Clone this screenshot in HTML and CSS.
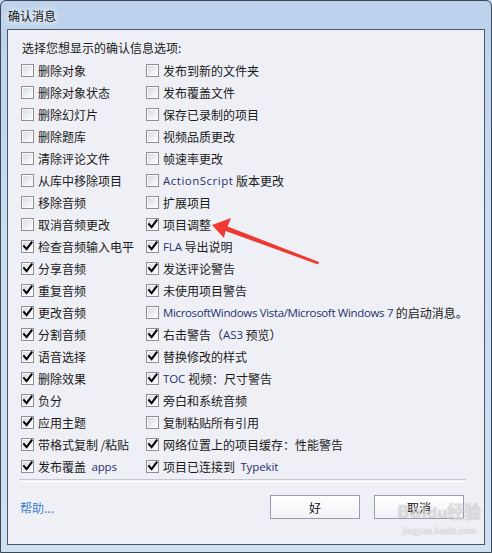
FILE: index.html
```html
<!DOCTYPE html>
<html lang="zh-CN">
<head>
  <meta charset="UTF-8" />
  <title>确认消息</title>
  <link rel="stylesheet" href="styles.css">
</head>
<body>
  <div class="window">
    <div class="titlebar"><span class="title">确认消息</span></div>

    <div class="client">
      <p class="intro">选择您想显示的确认信息选项:</p>

      <div class="options">
        <label class="opt"><span class="box"></span>删除对象</label>
        <label class="opt"><span class="box"></span>发布到新的文件夹</label>
        <label class="opt"><span class="box"></span>删除对象状态</label>
        <label class="opt"><span class="box"></span>发布覆盖文件</label>
        <label class="opt"><span class="box"></span>删除幻灯片</label>
        <label class="opt"><span class="box"></span>保存已录制的项目</label>
        <label class="opt"><span class="box"></span>删除题库</label>
        <label class="opt"><span class="box"></span>视频品质更改</label>
        <label class="opt"><span class="box"></span>清除评论文件</label>
        <label class="opt"><span class="box"></span>帧速率更改</label>
        <label class="opt"><span class="box"></span>从库中移除项目</label>
        <label class="opt"><span class="box"></span><span class="lat wide">ActionScript</span>&nbsp;版本更改</label>
        <label class="opt"><span class="box"></span>移除音频</label>
        <label class="opt"><span class="box"></span>扩展项目</label>
        <label class="opt"><span class="box"></span>取消音频更改</label>
        <label class="opt"><span class="box on"><svg viewBox="0 0 13 13"><path d="M3 6.2 L5.6 9.2 L10.6 2.4"/></svg></span>项目调整</label>
        <label class="opt"><span class="box on"><svg viewBox="0 0 13 13"><path d="M3 6.2 L5.6 9.2 L10.6 2.4"/></svg></span>检查音频输入电平</label>
        <label class="opt"><span class="box on"><svg viewBox="0 0 13 13"><path d="M3 6.2 L5.6 9.2 L10.6 2.4"/></svg></span><span class="lat">FLA</span>&nbsp;导出说明</label>
        <label class="opt"><span class="box on"><svg viewBox="0 0 13 13"><path d="M3 6.2 L5.6 9.2 L10.6 2.4"/></svg></span>分享音频</label>
        <label class="opt"><span class="box on"><svg viewBox="0 0 13 13"><path d="M3 6.2 L5.6 9.2 L10.6 2.4"/></svg></span>发送评论警告</label>
        <label class="opt"><span class="box on"><svg viewBox="0 0 13 13"><path d="M3 6.2 L5.6 9.2 L10.6 2.4"/></svg></span>重复音频</label>
        <label class="opt"><span class="box on"><svg viewBox="0 0 13 13"><path d="M3 6.2 L5.6 9.2 L10.6 2.4"/></svg></span>未使用项目警告</label>
        <label class="opt"><span class="box on"><svg viewBox="0 0 13 13"><path d="M3 6.2 L5.6 9.2 L10.6 2.4"/></svg></span>更改音频</label>
        <label class="opt"><span class="box"></span><span class="lat narrow">MicrosoftWindows Vista/Microsoft Windows 7</span>&nbsp;的启动消息。</label>
        <label class="opt"><span class="box on"><svg viewBox="0 0 13 13"><path d="M3 6.2 L5.6 9.2 L10.6 2.4"/></svg></span>分割音频</label>
        <label class="opt"><span class="box on"><svg viewBox="0 0 13 13"><path d="M3 6.2 L5.6 9.2 L10.6 2.4"/></svg></span>右击警告（<span class="lat">AS3</span>&nbsp;预览）</label>
        <label class="opt"><span class="box on"><svg viewBox="0 0 13 13"><path d="M3 6.2 L5.6 9.2 L10.6 2.4"/></svg></span>语音选择</label>
        <label class="opt"><span class="box on"><svg viewBox="0 0 13 13"><path d="M3 6.2 L5.6 9.2 L10.6 2.4"/></svg></span>替换修改的样式</label>
        <label class="opt"><span class="box on"><svg viewBox="0 0 13 13"><path d="M3 6.2 L5.6 9.2 L10.6 2.4"/></svg></span>删除效果</label>
        <label class="opt"><span class="box on"><svg viewBox="0 0 13 13"><path d="M3 6.2 L5.6 9.2 L10.6 2.4"/></svg></span><span class="lat">TOC</span>&nbsp;视频：尺寸警告</label>
        <label class="opt"><span class="box on"><svg viewBox="0 0 13 13"><path d="M3 6.2 L5.6 9.2 L10.6 2.4"/></svg></span>负分</label>
        <label class="opt"><span class="box on"><svg viewBox="0 0 13 13"><path d="M3 6.2 L5.6 9.2 L10.6 2.4"/></svg></span>旁白和系统音频</label>
        <label class="opt"><span class="box on"><svg viewBox="0 0 13 13"><path d="M3 6.2 L5.6 9.2 L10.6 2.4"/></svg></span>应用主题</label>
        <label class="opt"><span class="box"></span>复制粘贴所有引用</label>
        <label class="opt"><span class="box on"><svg viewBox="0 0 13 13"><path d="M3 6.2 L5.6 9.2 L10.6 2.4"/></svg></span>带格式复制&thinsp;/粘贴</label>
        <label class="opt"><span class="box on"><svg viewBox="0 0 13 13"><path d="M3 6.2 L5.6 9.2 L10.6 2.4"/></svg></span>网络位置上的项目缓存：性能警告</label>
        <label class="opt"><span class="box on"><svg viewBox="0 0 13 13"><path d="M3 6.2 L5.6 9.2 L10.6 2.4"/></svg></span>发布覆盖&nbsp;&nbsp;<span class="lat">apps</span></label>
        <label class="opt"><span class="box on"><svg viewBox="0 0 13 13"><path d="M3 6.2 L5.6 9.2 L10.6 2.4"/></svg></span>项目已连接到&nbsp;&nbsp;<span class="lat">Typekit</span></label>
      </div>

      <div class="sep"></div>

      <div class="footer">
        <a class="help" href="#">帮助...</a>
        <div class="buttons">
          <button class="btn">好</button>
          <button class="btn">取消</button>
        </div>
      </div>
    </div>

    <!-- red annotation arrow drawn over the dialog -->
    <svg class="arrow" viewBox="0 0 492 553">
      <polygon points="212,225 231,218 227.5,226.5 319,262 318,264.5 225.5,231 224,238" />
    </svg>

    <div class="watermark">
      <span class="wm-logo">Bai<span class="wm-paw">du</span>经验</span>
      <span class="wm-url">jingyan.baidu.com</span>
    </div>
  </div>
</body>
</html>
```

FILE: styles.css
```css
body { margin: 0; background: #c3d7ee; }

.window {
  position: relative;
  width: 492px; height: 553px;
  box-sizing: border-box;
  display: flex; flex-direction: column;
  padding: 0 6px 7px 6px;
  border: 1px solid #3c4756;
  border-radius: 6px 6px 0 0;
  background: linear-gradient(180deg, #bcd2ec 0%, #c8dcf2 40%, #cfe0f4 100%);
  font-family: "Noto Sans CJK SC", "Noto Sans", sans-serif;
  font-size: 12px;
  color: #1a1a1a;
  overflow: hidden;
}

.titlebar { height: 28px; display: flex; align-items: center; padding-left: 1px; }
.title { font-size: 12px; color: #111; text-shadow: 0 0 6px #fff, 0 0 10px #fff; }

.client {
  flex: 1;
  background: #eff0f6;
  border: 1px solid #4a5566;
  padding: 7px 0 0 13px;
  display: flex; flex-direction: column;
}

.intro { margin: 0; height: 22px; line-height: 22px; padding-left: 1px; }

.options {
  display: grid;
  grid-template-columns: 125px auto;
  grid-auto-rows: 22px;
}

.opt { display: flex; align-items: center; white-space: nowrap; }
.lat { font-family: "Open Sans", "Noto Sans", sans-serif; font-size: 11.5px; color: #27316e; letter-spacing: -0.1px; }
.lat.wide { letter-spacing: 0.5px; }
.lat.narrow { letter-spacing: -0.35px; }

.box {
  width: 11px; height: 11px;
  margin-right: 4px;
  border: 1px solid #8d8e98;
  background: linear-gradient(135deg, #d6d7de 0%, #f4f4f7 70%, #fff 100%);
  box-shadow: inset 0 0 0 1px #fbfbfc;
  position: relative;
}
.box svg { position: absolute; left: -1px; top: -1px; width: 13px; height: 13px; }
.box path { fill: none; stroke: #000; stroke-width: 2; stroke-linecap: square; stroke-linejoin: miter; }

.sep {
  margin: 2px 18px 0 -1px;
  height: 1px;
  border-top: 1px solid #c6c7ce;
  border-bottom: 1px solid #ffffff;
}

.footer { display: flex; align-items: center; justify-content: space-between; margin-top: 13px; padding-right: 20px; }
.help { color: #3b7fd0; text-decoration: none; margin-left: -1px; }
.buttons { display: flex; gap: 14px; }
.btn {
  width: 90px; height: 24px;
  font-family: "Noto Sans CJK SC", sans-serif;
  font-size: 12px;
  color: #111;
  background: linear-gradient(180deg, #ffffff 0%, #f3f3f7 100%);
  border: 1px solid #979cb0;
  border-radius: 0;
  padding: 0;
}

.arrow { position: absolute; left: -1px; top: -1px; width: 492px; height: 553px; pointer-events: none; }
.arrow polygon { fill: #ee3a33; }

.watermark {
  position: absolute; left: 396px; top: 500px;
  display: flex; flex-direction: column; align-items: center;
  white-space: nowrap;
  pointer-events: none;
  color: rgba(255, 255, 255, 0.5);
  text-shadow: 0 0 1px rgba(120, 120, 130, 0.55);
}
.wm-logo { font-family: "DejaVu Sans", sans-serif; font-weight: bold; font-size: 17px; line-height: 22px; }
.wm-paw { font-size: 14px; }
.wm-url { font-family: "Liberation Serif", serif; font-size: 10px; line-height: 14px; }
```
